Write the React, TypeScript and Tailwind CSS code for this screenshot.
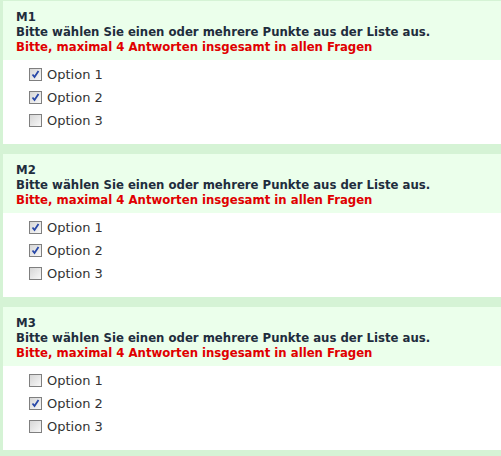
import React from 'react';

interface Question {
  id: string;
  checked: boolean[];
}

const questions: Question[] = [
  { id: 'M1', checked: [true, true, false] },
  { id: 'M2', checked: [true, true, false] },
  { id: 'M3', checked: [false, true, false] },
];

const Box = ({ checked }: { checked: boolean }) => (
  <span className="flex h-[13px] w-[13px] items-center justify-center border border-[#7f7f7f] bg-gradient-to-br from-[#d6d6d6] to-[#f8f8f8]">
    {checked && (
      <svg width="9" height="9" viewBox="0 0 9 9">
        <path d="M1.5 4.5 L3.5 7 L7.5 1" fill="none" stroke="#2848a8" strokeWidth="1.8" />
      </svg>
    )}
  </span>
);

export default function App() {
  return (
    <div className="min-h-[456px] bg-[#d5f3d5] pl-[3px] pt-px font-['DejaVu_Sans',Verdana,sans-serif] text-[13px]">
      {questions.map((q) => (
        <div key={q.id} className="mb-[10px]">
          <div className="h-[59px] bg-[#ebffeb] px-[13px] pt-[8px] font-['DejaVu_Sans_Condensed','DejaVu_Sans',sans-serif] font-bold leading-[15px]">
            <div className="text-[#1f2d3d]">{q.id}</div>
            <div className="text-[#1f2d3d]">Bitte wählen Sie einen oder mehrere Punkte aus der Liste aus.</div>
            <div className="text-[#e00000]">Bitte, maximal 4 Antworten insgesamt in allen Fragen</div>
          </div>
          <div className="flex flex-col gap-[10px] bg-white pb-[17px] pl-[26px] pt-[8px]">
            {q.checked.map((c, i) => (
              <label key={i} className="flex h-[13px] items-center gap-[5px] text-[#333]">
                <Box checked={c} />
                <span>Option {i + 1}</span>
              </label>
            ))}
          </div>
        </div>
      ))}
    </div>
  );
}
